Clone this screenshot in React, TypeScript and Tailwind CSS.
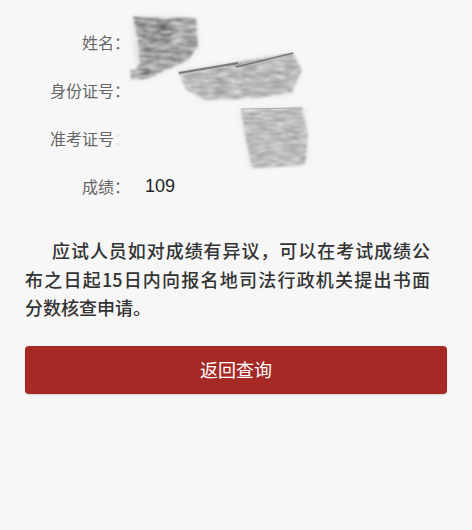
import React from "react";

const cjk = { fontFamily: '"Noto Sans CJK SC", "Noto Sans", sans-serif' };

function Scribbles() {
  return (
    <svg
      className="pointer-events-none absolute left-0 top-0"
      width="472"
      height="200"
      viewBox="0 0 472 200"
    >
      <defs>
        <filter id="pencil" x="-10%" y="-10%" width="120%" height="120%">
          <feTurbulence type="fractalNoise" baseFrequency="0.07 0.45" numOctaves="3" seed="7" result="noise" />
          <feColorMatrix
            in="noise"
            type="matrix"
            values="0 0 0 0 0  0 0 0 0 0  0 0 0 0 0  0 0 0 -1.8 1.45"
            result="mask"
          />
          <feComposite in="SourceGraphic" in2="mask" operator="in" result="tex" />
          <feGaussianBlur in="tex" stdDeviation="1" />
        </filter>
        <filter id="soft">
          <feGaussianBlur stdDeviation="3" />
        </filter>
      </defs>
      <g filter="url(#soft)" opacity="0.3">
        <polygon points="133,18 196,18 198,48 185,62 160,72 140,80 135,55" fill="#aaa" />
        <polygon points="180,72 292,53 300,72 290,95 200,100" fill="#bbb" />
        <polygon points="240,110 304,108 308,160 250,168" fill="#bbb" />
      </g>
      <g filter="url(#pencil)" opacity="0.85">
        <polygon points="133,17 196,18 198,46 188,60 166,70 150,78 130,81 140,62 138,40" fill="#6a6a6a" />
        <polygon points="133,17 172,19 174,34 152,44 140,36" fill="#444" />
        <polygon points="142,46 186,50 172,60 147,63" fill="#555" />
        <polygon points="130,70 150,68 148,78 131,80" fill="#444" />
        <polygon points="178,72 238,62 293,53 302,70 292,92 252,99 205,100 186,90" fill="#8a8a8a" />
        <polygon points="241,110 302,108 308,133 305,166 252,168 246,140" fill="#8f8f8f" />
      </g>
      <line x1="179" y1="73" x2="238" y2="63" stroke="#666" strokeWidth="2" opacity="0.8" />
      <line x1="236" y1="67" x2="293" y2="53" stroke="#666" strokeWidth="1.8" opacity="0.8" />
      <line x1="241" y1="109" x2="302" y2="108" stroke="#aaa" strokeWidth="1" />
    </svg>
  );
}

export default function App() {
  const rows: { label: React.ReactNode; value?: string }[] = [
    { label: "姓名：" },
    { label: "身份证号：" },
    {
      label: (
        <>
          准考证号<span className="text-[#e4e4e4]">：</span>
        </>
      ),
    },
    { label: "成绩：", value: "109" },
  ];
  return (
    <div className="relative min-h-[530px] w-[472px] bg-[#f7f7f7]" style={cjk}>
      <div className="flex flex-col pt-[18px]">
        {rows.map((r, i) => (
          <div key={i} className="flex h-[48px] items-center">
            <div className="w-[130px] text-right text-[16px] text-[#666]">{r.label}</div>
            {r.value && (
              <div
                className="ml-[15px] text-[18px] text-[#222]"
                style={{ fontFamily: '"Liberation Sans", Arial, sans-serif' }}
              >
                {r.value}
              </div>
            )}
          </div>
        ))}
      </div>
      <Scribbles />
      <div className="ml-[25px] mt-[26px] w-[405px] text-[18px] font-medium leading-[28.5px] text-[#333]">
        <div className="pl-[27px] text-justify [text-align-last:justify]">应试人员如对成绩有异议，可以在考试成绩公</div>
        <div className="text-justify [text-align-last:justify]">布之日起15日内向报名地司法行政机关提出书面</div>
        <div>分数核查申请。</div>
      </div>
      <div className="px-[25px] pt-[24px]">
        <button className="flex h-[48px] w-full items-center justify-center rounded-[4px] bg-[#a52a25] text-[18px] text-white shadow-[0_1px_2px_rgba(0,0,0,0.15)]">
          返回查询
        </button>
      </div>
    </div>
  );
}
